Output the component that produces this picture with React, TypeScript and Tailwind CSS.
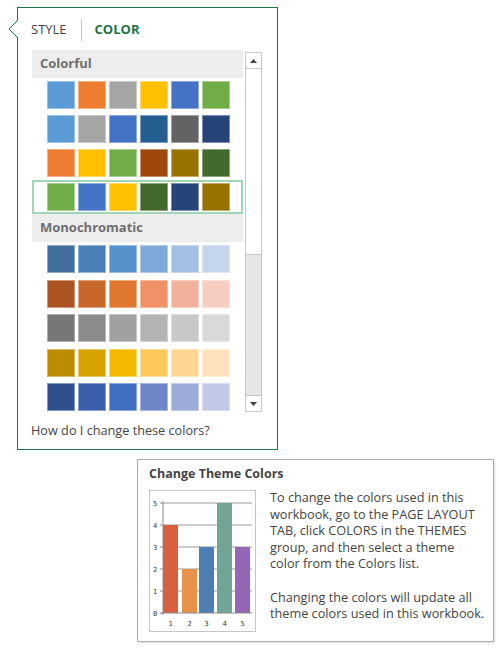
import React from "react";

const colorful: string[][] = [
  ["#5b9bd5", "#ed7d31", "#a5a5a5", "#ffc000", "#4472c4", "#70ad47"],
  ["#5b9bd5", "#a5a5a5", "#4472c4", "#255e91", "#636363", "#264478"],
  ["#ed7d31", "#ffc000", "#70ad47", "#9e480e", "#997300", "#43682b"],
  ["#70ad47", "#4472c4", "#ffc000", "#43682b", "#264478", "#997300"],
];

const mono: string[][] = [
  ["#41709c", "#4a80b6", "#5592cb", "#7ca9da", "#a3c0e4", "#c5d5ec"],
  ["#ab5421", "#c8672a", "#e0772f", "#f09167", "#f2b19a", "#f6cdc0"],
  ["#777777", "#8b8b8b", "#a0a0a0", "#b3b3b3", "#c7c7c7", "#d9d9d9"],
  ["#bb8b00", "#d7a300", "#f3b900", "#fec85b", "#fed591", "#ffe2bb"],
  ["#2e518d", "#3a5eaa", "#416ec0", "#6e86c8", "#9dabd8", "#c0c9e6"],
];

const FONT = { fontFamily: '"Open Sans", "Noto Sans", Arial, sans-serif' };

function Row({ colors, selected, tall }: { colors: string[]; selected?: boolean; tall?: boolean }) {
  return (
    <div
      className={`${tall ? "h-[34.5px]" : "h-[34px]"} border-2 flex items-center pl-[13px] gap-[3px] ${
        selected ? "border-[#9fd6b6]" : "border-transparent"
      }`}
    >
      {colors.map((c, i) => (
        <div
          key={i}
          className="w-[28px] h-[28px] border border-white/40"
          style={{ backgroundColor: c }}
        />
      ))}
    </div>
  );
}

function Header({ text }: { text: string }) {
  return (
    <div className="h-[28px] bg-[#ededed] flex items-center pl-[8px] text-[13px] font-bold text-[#6f6f6f]">
      {text}
    </div>
  );
}

function Chart() {
  const bars = [
    { v: 4, c: "#d9603f", x: 13 },
    { v: 2, c: "#e8914a", x: 32 },
    { v: 3, c: "#4d7fb5", x: 49 },
    { v: 5, c: "#72a596", x: 67 },
    { v: 3, c: "#9466b5", x: 85 },
  ];
  const y0 = 122;
  const step = 22;
  return (
    <svg width="105" height="140" viewBox="0 0 105 140" className="block">
      {[1, 2, 3, 4, 5].map((i) => (
        <line key={i} x1="13" x2="102" y1={y0 - i * step} y2={y0 - i * step} stroke="#bdbdbd" strokeWidth="1.5" />
      ))}
      {bars.map((b, i) => (
        <rect key={i} x={b.x} y={y0 - b.v * step} width="15" height={b.v * step} fill={b.c} />
      ))}
      <line x1="13" x2="13" y1="10" y2={y0 + 2} stroke="#8a8a8a" strokeWidth="1" />
      <line x1="11" x2="102" y1={y0} y2={y0} stroke="#8a8a8a" strokeWidth="1" />
      {[0, 1, 2, 3, 4, 5].map((i) => (
        <React.Fragment key={i}>
          <line x1="10" x2="13" y1={y0 - i * step} y2={y0 - i * step} stroke="#8a8a8a" strokeWidth="1" />
          <text x="5" y={y0 - i * step + 3} fontSize="7" fill="#333" textAnchor="middle" fontFamily="DejaVu Sans Mono, monospace">
            {i}
          </text>
        </React.Fragment>
      ))}
      {[1, 2, 3, 4, 5].map((n, i) => (
        <text key={n} x={bars[i].x + 7.5} y="135" fontSize="7" fill="#333" textAnchor="middle" fontFamily="DejaVu Sans Mono, monospace">
          {n}
        </text>
      ))}
    </svg>
  );
}

export default function App() {
  return (
    <div className="relative w-[499px] h-[651px] bg-white overflow-hidden" style={FONT}>
      <div className="pl-[17px] pt-[7px]">
        <div className="relative w-[261px] h-[443px] border border-[#217346] bg-white flex flex-col">
          {/* notch */}
          <svg
            width="11"
            height="19"
            viewBox="0 0 11 19"
            className="absolute left-[-10px] top-[12px]"
          >
            <path d="M10 0 L1 9 L10 18" fill="white" stroke="#217346" strokeWidth="1" />
            <rect x="10" y="0" width="1" height="19" fill="white" />
          </svg>
          {/* tabs */}
          <div className="h-[42px] flex items-center pl-[13px] pt-[1px]">
            <span className="text-[13px] text-[#444]">STYLE</span>
            <div className="w-px h-[22px] bg-[#c8c8c8] ml-[14px] mr-[13px]" />
            <span className="text-[13px] font-bold text-[#217346]">COLOR</span>
          </div>
          {/* list area */}
          <div className="flex pl-[14px] h-[362px]">
            <div className="w-[211px] h-[362px] overflow-hidden">
              <Header text="Colorful" />
              {colorful.map((r, i) => (
                <Row key={i} colors={r} selected={i === 3} />
              ))}
              <Header text="Monochromatic" />
              {mono.map((r, i) => (
                <Row key={i} colors={r} tall />
              ))}
            </div>
            <div className="ml-[2px] mt-[2px] w-[17px] h-[360px] border border-[#c6c6c6] bg-[#e6e6e6] flex flex-col">
              <div className="h-[16px] bg-white border-b border-[#c6c6c6] flex items-center justify-center">
                <svg width="7" height="4" viewBox="0 0 7 4">
                  <path d="M0 4 L3.5 0 L7 4 Z" fill="#444" />
                </svg>
              </div>
              <div className="h-[186px] bg-white border-b border-[#c6c6c6]" />
              <div className="flex-1" />
              <div className="h-[16px] bg-white border-t border-[#c6c6c6] flex items-center justify-center">
                <svg width="7" height="4" viewBox="0 0 7 4">
                  <path d="M0 0 L3.5 4 L7 0 Z" fill="#444" />
                </svg>
              </div>
            </div>
          </div>
          <div className="pl-[13px] pt-[9px] text-[12.7px] text-[#444]">How do I change these colors?</div>
        </div>
      </div>
      {/* tooltip */}
      <div className="pl-[137px] pt-[9px]">
        <div className="w-[357px] h-[183px] border border-[#adadad] bg-white shadow-[1px_1px_2px_rgba(0,0,0,0.15)] pl-[11px] pr-[3px] pt-[5px]">
          <div className="text-[12.5px] font-bold text-[#444] leading-[18px]">Change Theme Colors</div>
          <div className="flex mt-[7px]">
            <div className="w-[107px] h-[142px] border border-[#c6c6c6] shrink-0">
              <Chart />
            </div>
            <div className="ml-[14px] w-[218px] text-[12.7px] leading-[16.6px] text-[#444] -mt-[1px]">
              <p>
                To change the colors used in this workbook, go to the PAGE LAYOUT TAB, click COLORS in the THEMES group, and then select a theme
                <br />
                color from the Colors list.
              </p>
              <p className="mt-[16.6px]">Changing the colors will update all theme colors used in this workbook.</p>
            </div>
          </div>
        </div>
      </div>
    </div>
  );
}
